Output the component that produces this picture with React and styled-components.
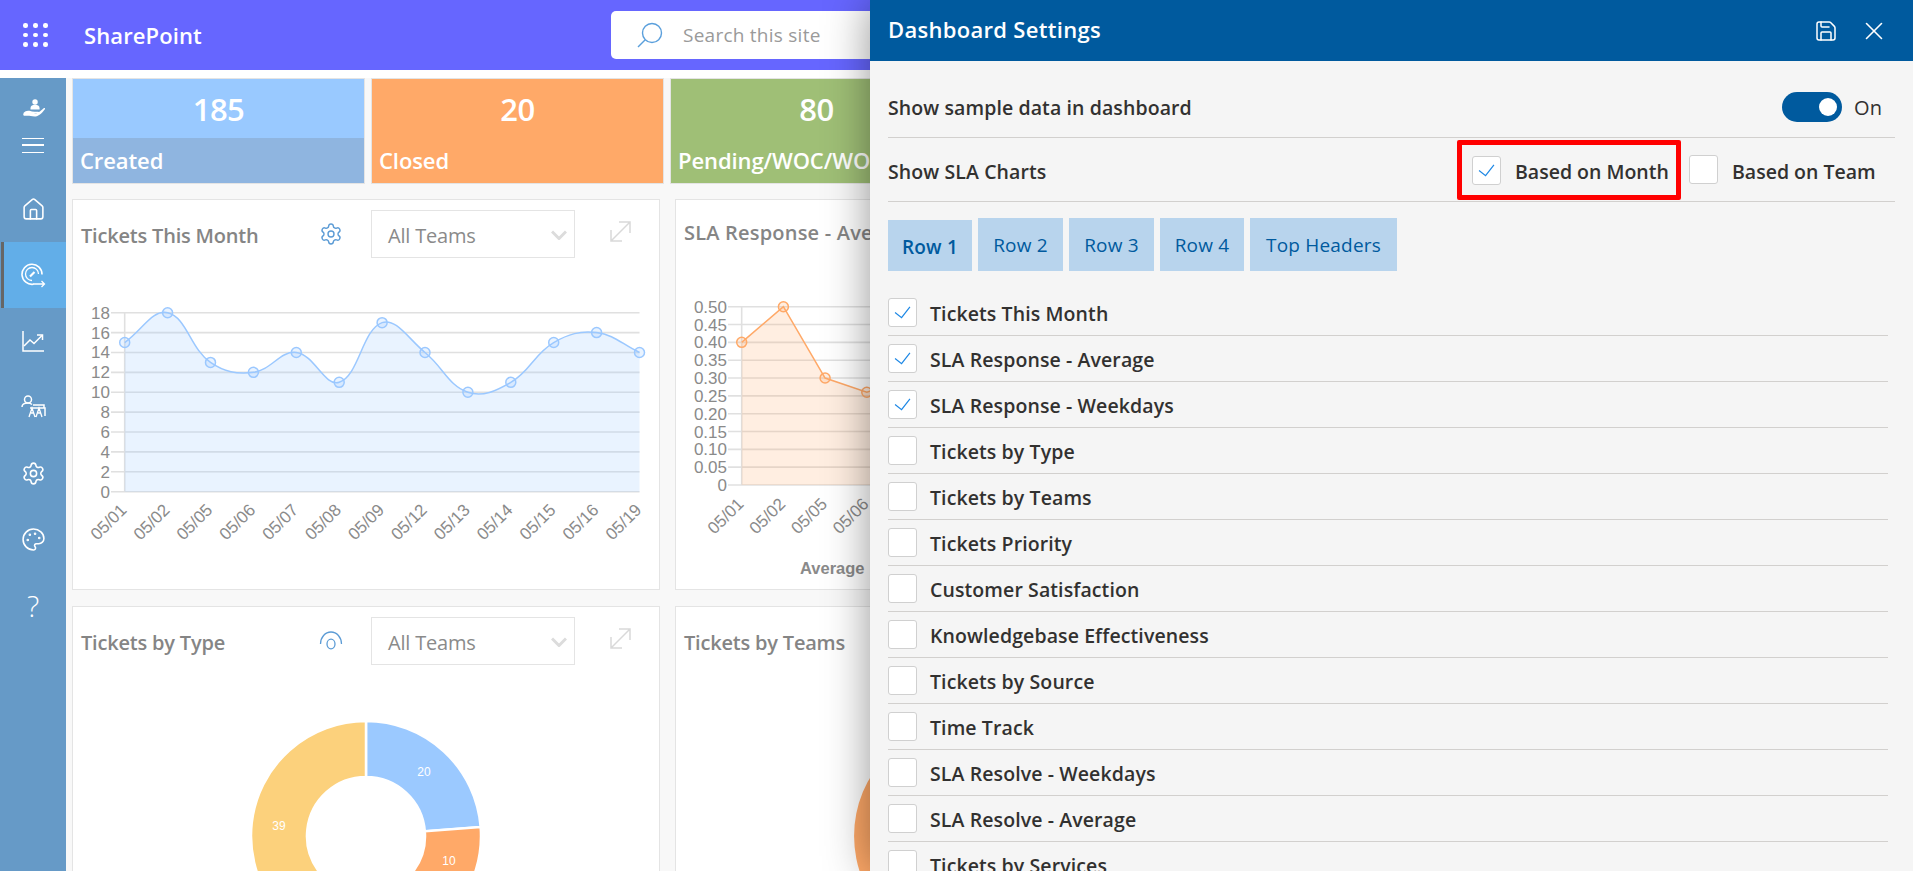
import React from 'react'
import styled, { createGlobalStyle } from 'styled-components'
import { House, Settings, Palette, Save, X } from 'lucide-react'

const UI_FONT = '"Open Sans", "Noto Sans", sans-serif'

const GlobalStyle = createGlobalStyle`
    html, body { margin:0; padding:0; height:100%; overflow:hidden; background:#fff; }
    body { font-family:${UI_FONT}; }
    * { box-sizing:border-box; }
`

const Page = styled.div`
    position:relative;
    width:1913px;
    height:871px;
    overflow:hidden;
    display:flex;
    flex-direction:column;
    background:#fff;
`

const TopBar = styled.header`
    flex:none;
    height:70px;
    background:#6666ff;
    display:flex;
    align-items:center;
    color:#fff;
`
const Waffle = styled.div`
    width:24px;
    margin-left:23px;
    display:grid;
    grid-template-columns:repeat(3,4px);
    gap:5px;
    justify-content:space-between;
    span { width:4.5px; height:4.5px; border-radius:50%; background:#fff; }
`
const Brand = styled.div`
    margin-left:37px;
    width:117px;
    font-size:22px;
    font-weight:600;
    letter-spacing:.1px;
    white-space:nowrap;
`
const SearchBox = styled.div`
    width:400px;
    height:48px;
    margin:0 0 0 410px;
    background:#fff;
    border-radius:5px;
    display:flex;
    align-items:center;
    padding-left:26px;
    color:#9a9a9a;
    font-size:19px;
    letter-spacing:.25px;
    gap:20px;
`

const Body = styled.div`
    flex:1;
    min-height:0;
    margin-top:8px;
    display:flex;
    background:#f8f8f8;
`
const Sidebar = styled.nav`
    flex:none;
    width:66px;
    background:#669ac7;
    color:#fff;
    display:flex;
    flex-direction:column;
`
const SideTop = styled.div`
    height:98px;
    padding-top:21px;
    display:flex;
    flex-direction:column;
    align-items:center;
    svg { margin-left:4px; }
`
const Burger = styled.div`
    width:22px;
    height:15px;
    margin-top:19px;
    border-top:1.5px solid #fff;
    border-bottom:1.5px solid #fff;
    position:relative;
    &::after {
        content:'';
        position:absolute;
        left:0;
        right:0;
        top:5.2px;
        height:1.5px;
        background:#fff;
    }
`
const SideItem = styled.div`
    height:66px;
    display:flex;
    align-items:center;
    justify-content:center;
    background:${p => p.$active ? '#62aee8' : 'transparent'};
    border-left:${p => p.$active ? '3px solid #666' : '0'};
    margin-left:${p => p.$active ? '1px' : '0'};
    padding-right:${p => p.$active ? '3px' : '0'};
    font-size:29px;
    font-weight:300;
`

const Main = styled.main`
    flex:1;
    min-width:0;
    padding-left:6px;
    overflow:hidden;
`
const Cards = styled.div`
    display:grid;
    grid-template-columns:repeat(6,293px);
    gap:6px;
`
const Card = styled.div`
    height:106px;
    border:1px solid #e4e4e4;
    background:${p => p.$color};
    color:#fff;
    display:flex;
    flex-direction:column;
    white-space:nowrap;
`
const CardNumber = styled.div`
    height:59px;
    display:flex;
    align-items:center;
    justify-content:center;
    font-size:31px;
    font-weight:600;
    letter-spacing:-.5px;
`
const CardLabel = styled.div`
    flex:1;
    background:${p => p.$band || 'transparent'};
    display:flex;
    align-items:center;
    padding:0 0 2px 7px;
    font-size:22px;
    font-weight:600;
    letter-spacing:-.1px;
`
const Panels = styled.div`
    margin-top:15px;
    display:grid;
    grid-template-columns:repeat(2,588px);
    grid-auto-rows:391px;
    gap:16px 15px;
`
const Panel = styled.section`
    background:#fff;
    border:1px solid #e4e4e4;
    overflow:hidden;
`
const PanelHead = styled.div`
    height:60px;
    padding:10px 0 0 8px;
    display:flex;
    align-items:flex-start;
`
const PanelTitle = styled.div`
    width:234px;
    height:48px;
    padding-top:${p => p.$raised ? '9px' : '12px'};
    font-size:20px;
    font-weight:600;
    color:#858585;
    letter-spacing:${p => p.$raised ? '.2px' : '-.2px'};
    white-space:nowrap;
`
const HeadIcon = styled.div`
    width:52px;
    height:48px;
    padding-top:12px;
    margin-left:4px;
    color:#5b9bd5;
`
const TeamSelect = styled.div`
    width:204px;
    height:48px;
    border:1.5px solid #e4e4e4;
    display:flex;
    align-items:center;
    justify-content:space-between;
    padding:2px 7px 0 16px;
    font-size:20px;
    color:#8a8a8a;
    letter-spacing:-.2px;
`
const ExpandBox = styled.div`
    margin:11px 0 0 35px;
    width:21px;
    height:21px;
`
const ChartSvg = styled.svg`
    display:block;
    width:586px;
    height:330px;
`

const Drawer = styled.aside`
    position:absolute;
    top:0;
    right:0;
    bottom:0;
    width:1043px;
    background:#f5f5f5;
    box-shadow:0 0 42px rgba(0,0,0,.42);
    color:#323130;
`
const DrawerHead = styled.div`
    height:61px;
    background:#005a9e;
    color:#fff;
    display:flex;
    align-items:center;
    padding:0 24px 0 18px;
`
const DrawerTitle = styled.h1`
    flex:1;
    margin:0 0 3px;
    font-size:22px;
    font-weight:600;
    letter-spacing:.3px;
`
const HeadActions = styled.div`
    display:flex;
    align-items:center;
    gap:21px;
`
const DrawerBody = styled.div`
    padding:0 18px;
`
const SettingRow = styled.div`
    display:flex;
    align-items:center;
    justify-content:space-between;
    height:${p => p.$h}px;
    padding-top:${p => p.$pad || 0}px;
    border-bottom:1px solid #d2d0ce;
    font-size:19.5px;
    font-weight:600;
    letter-spacing:.1px;
`
const ToggleWrap = styled.div`
    display:flex;
    align-items:center;
    gap:12px;
    margin-right:13px;
    font-size:20px;
    font-weight:400;
`
const Toggle = styled.div`
    width:60px;
    height:30px;
    border-radius:15px;
    background:#005a9e;
    display:flex;
    align-items:center;
    justify-content:flex-end;
    padding-right:5px;
    &::after {
        content:'';
        width:18px;
        height:18px;
        border-radius:50%;
        background:#fff;
    }
`
const SlaChoices = styled.div`
    display:flex;
    align-items:center;
    margin-right:22px;
`
const Highlight = styled.div`
    height:60px;
    width:224px;
    border:5px solid #f00;
    border-radius:2px;
    display:flex;
    align-items:center;
    padding-left:10px;
    margin:1px 8px 0 0;
`
const Choice = styled.label`
    display:flex;
    align-items:center;
    gap:14px;
    white-space:nowrap;
    letter-spacing:0;
    width:${p => p.$w ? `${p.$w}px` : 'auto'};
`
const LabelText = styled.span`
    padding-top:${p => p.$drop}px;
    white-space:nowrap;
`
const Box = styled.span`
    flex:none;
    width:29px;
    height:29px;
    background:#fff;
    border:1px solid #d0d0d0;
    border-radius:3px;
    display:flex;
    align-items:center;
    justify-content:center;
`
const Tabs = styled.div`
    display:flex;
    align-items:flex-end;
    gap:6px;
    margin-top:16px;
`
const Tab = styled.div`
    height:${p => p.$active ? 51 : 53}px;
    width:${p => p.$w}px;
    padding-top:${p => p.$active ? 3 : 1}px;
    background:#b8d4ed;
    color:#005a9e;
    font-size:19px;
    font-weight:${p => p.$active ? 600 : 400};
    letter-spacing:.2px;
    display:flex;
    align-items:center;
    justify-content:center;
`
const ChartList = styled.div`
    margin:19px 7px 0 0;
`
const ChartRow = styled.label`
    height:46px;
    display:flex;
    align-items:center;
    gap:13px;
    border-bottom:1px solid #d2d0ce;
    font-size:19.5px;
    font-weight:600;
    letter-spacing:.1px;
`

const CheckMark = () => (
    <svg width="29" height="29" viewBox="0 0 29 29" fill="none" stroke="#1e88e5" strokeWidth="1.3">
        <path d="M6.5 14.5 L13.5 20 L22.5 8.5" />
    </svg>
)
const Check = ({ on }) => <Box>{on && <CheckMark />}</Box>

const HandIcon = () => (
    <svg width="27" height="20" viewBox="0 0 27 22" fill="#fff">
        <circle cx="13" cy="3.2" r="3" />
        <path d="M8 10c0-2.600 2.400-3.600 5-3.600s5 1 5 3.600v1.600H8z" />
        <path d="M0.500 15c1.600-1.800 4-2.600 6.400-2 2 .5 3.600 1 5.600 1h4c1 0 1 1.400 0 1.400h-4.500c3 .8 5-.2 10.500-5.200.8-.6 2 .2 1.300 1-3.500 4.600-7 8-11.300 8-3.500 0-5-.8-8-.8H1.500c-.8 0-1.500-.7-1.500-1.400z" />
    </svg>
)
const GaugeIcon = () => (
    <svg width="25" height="25" viewBox="0 0 25 25" fill="none" stroke="#fff" strokeWidth="1.6">
        <path d="M12.500 21.200A10 10 0 1 1 21 11.500" />
        <path d="M11 17.500A6.500 6.500 0 1 1 17.500 11" strokeWidth="1.3" />
        <path d="M9 13.500l4.500-4.500" strokeWidth="2.200" />
        <path d="M12 21h11.500M20.500 18l3 3-3 3" strokeWidth="1.3" />
    </svg>
)
const TrendIcon = () => (
    <svg width="22" height="22" viewBox="0 0 22 22" fill="none" stroke="#fff" strokeWidth="1.5">
        <path d="M1 1v20h21" />
        <path d="M2 16l6-6 4 3.500 8-8" />
        <path d="M15 5h5.500v5" />
    </svg>
)
const TeamIcon = () => (
    <svg width="25" height="24" viewBox="0 0 25 24" fill="none" stroke="#fff" strokeWidth="1.5">
        <circle cx="7" cy="4.500" r="3.500" />
        <path d="M1 12c0-2.500 2.500-4 6-4 1.500 0 3 .6 4 1.500" />
        <path d="M9 13h15v8M12 10h11v3" />
        <path d="M8 22l3-9 3 9M10 18h3M15 22l3-9 3 9M17 18h3" strokeWidth="1.3" />
    </svg>
)
const SearchIcon = () => (
    <svg width="26" height="26" viewBox="0 0 26 26" fill="none" stroke="#5a9fdc" strokeWidth="1.4">
        <circle cx="15" cy="11" r="9.500" />
        <path d="M8 18l-7 7" />
    </svg>
)
const EyeIcon = () => (
    <svg width="24" height="24" viewBox="0 0 24 24" fill="none" stroke="#5b9bd5" strokeWidth="1.3">
        <path d="M1.500 15a10.500 12 0 0 1 21 0" />
        <ellipse cx="12" cy="15" rx="4" ry="4.800" />
    </svg>
)
const Chevron = () => (
    <svg width="16" height="10" viewBox="0 0 16 10" fill="none" stroke="#dcdcdc" strokeWidth="3">
        <path d="M1 1.500l7 7 7-7" />
    </svg>
)
const ExpandIcon = () => (
    <svg width="21" height="21" viewBox="0 0 21 21" fill="none" stroke="#d9d9d9" strokeWidth="1.5">
        <path d="M1 20L20 1M9 1h11v11M1 9v11h11" />
    </svg>
)

// chart.js style bezier through the points
const splinePath = (pts, tension = 0.4) => {
    let d = `M${pts[0][0]} ${pts[0][1]}`
    const ctrl = pts.map((p, i) => {
        const prev = pts[i - 1] || p
        const next = pts[i + 1] || p
        const d01 = Math.hypot(p[0] - prev[0], p[1] - prev[1])
        const d12 = Math.hypot(next[0] - p[0], next[1] - p[1])
        const sum = d01 + d12 || 1
        const fa = tension * d01 / sum
        const fb = tension * d12 / sum
        return {
            before: [p[0] - fa * (next[0] - prev[0]), p[1] - fa * (next[1] - prev[1])],
            after: [p[0] + fb * (next[0] - prev[0]), p[1] + fb * (next[1] - prev[1])]
        }
    })
    for (let i = 1; i < pts.length; i++) {
        const a = ctrl[i - 1].after
        const b = ctrl[i].before
        d += ` C${a[0]} ${a[1]} ${b[0]} ${b[1]} ${pts[i][0]} ${pts[i][1]}`
    }
    return d
}
const straightPath = pts => pts.map((p, i) => `${i ? 'L' : 'M'}${p[0]} ${p[1]}`).join(' ')

const DATES = ['05/01', '05/02', '05/05', '05/06', '05/07', '05/08', '05/09', '05/12', '05/13', '05/14', '05/15', '05/16', '05/19']

const LineChart = ({ originX, axisX, stepX, tickStart, topY, bottomY, max, ticks, values, color, fill, smooth, labelY, children }) => {
    const yOf = v => bottomY - (v / max) * (bottomY - topY)
    const pts = values.map((v, i) => [axisX + stepX * i, yOf(v)])
    const lastX = axisX + stepX * (DATES.length - 1)
    const line = smooth ? splinePath(pts) : straightPath(pts)
    const area = `${line} L${pts[pts.length - 1][0]} ${bottomY} L${axisX} ${bottomY} Z`
    return (
        <ChartSvg viewBox={`${originX} 260 586 330`} fontFamily='"Liberation Sans", Arial, sans-serif' fontSize="17" fill="#8a8a8a">
            {ticks.map(t => (
                <line key={t.v} x1={tickStart} x2={lastX} y1={yOf(t.v)} y2={yOf(t.v)} stroke="#e0e0e0" strokeWidth="1.6" />
            ))}
            <line x1={axisX} x2={axisX} y1={topY} y2={bottomY} stroke="#e0e0e0" strokeWidth="1.6" />
            <path d={area} fill={fill} />
            <path d={line} fill="none" stroke={color} strokeWidth="1.5" />
            {pts.map((p, i) => (
                <circle key={i} cx={p[0]} cy={p[1]} r="5" fill={fill} stroke={color} strokeWidth="1.5" />
            ))}
            {ticks.map(t => (
                <text key={t.v} x={tickStart - 1} y={yOf(t.v) + 6} textAnchor="end">{t.label}</text>
            ))}
            {DATES.map((d, i) => {
                const x = axisX + stepX * i + 3
                return <text key={d} x={x} y={labelY} textAnchor="end" transform={`rotate(-45 ${x} ${labelY})`}>{d}</text>
            })}
            {children}
        </ChartSvg>
    )
}

const ringSlice = (cx, cy, r, r0, from, to) => {
    const pt = (rad, a) => {
        const t = (a - 90) * Math.PI / 180
        return `${cx + rad * Math.cos(t)} ${cy + rad * Math.sin(t)}`
    }
    const large = to - from > 180 ? 1 : 0
    return `M${pt(r, from)} A${r} ${r} 0 ${large} 1 ${pt(r, to)} L${pt(r0, to)} A${r0} ${r0} 0 ${large} 0 ${pt(r0, from)} Z`
}

const TypeDonut = () => (
    <ChartSvg viewBox="73 667 586 330" fontFamily='"Liberation Sans", Arial, sans-serif' fontSize="12" fill="#fff" textAnchor="middle">
        <g stroke="#fff" strokeWidth="2.500">
            <path d={ringSlice(366, 836, 115, 59, 0, 85.500)} fill="#9bc9ff" />
            <path d={ringSlice(366, 836, 115, 59, 85.500, 128)} fill="#ffa968" />
            <path d={ringSlice(366, 836, 115, 59, 128, 193)} fill="#9fbf76" />
            <path d={ringSlice(366, 836, 115, 59, 193, 360)} fill="#fcd17c" />
        </g>
        <text x="424" y="776">20</text>
        <text x="279" y="830">39</text>
        <text x="449" y="865">10</text>
    </ChartSvg>
)
const TeamsDonut = () => (
    <ChartSvg viewBox="676 667 586 330">
        <path d={ringSlice(969, 836, 115, 59, 180, 360)} fill="#ffa968" />
    </ChartSvg>
)

const monthTicks = [0, 2, 4, 6, 8, 10, 12, 14, 16, 18].map(v => ({ v, label: String(v) }))
const avgTicks = [0, 0.05, 0.1, 0.15, 0.2, 0.25, 0.3, 0.35, 0.4, 0.45, 0.5].map(v => ({ v, label: v === 0 ? '0' : v.toFixed(2) }))

const CHART_ROWS = [
    ['Tickets This Month', true],
    ['SLA Response - Average', true],
    ['SLA Response - Weekdays', true],
    ['Tickets by Type'],
    ['Tickets by Teams'],
    ['Tickets Priority'],
    ['Customer Satisfaction'],
    ['Knowledgebase Effectiveness'],
    ['Tickets by Source'],
    ['Time Track'],
    ['SLA Resolve - Weekdays'],
    ['SLA Resolve - Average'],
    ['Tickets by Services']
]

const App = () => (
    <Page>
        <GlobalStyle />
        <TopBar>
            <Waffle>{Array.from({ length: 9 }, (_, i) => <span key={i} />)}</Waffle>
            <Brand>SharePoint</Brand>
            <SearchBox><SearchIcon />Search this site</SearchBox>
        </TopBar>
        <Body>
            <Sidebar>
                <SideTop><HandIcon /><Burger /></SideTop>
                <SideItem><House size={25} strokeWidth={1.5} /></SideItem>
                <SideItem $active><GaugeIcon /></SideItem>
                <SideItem><TrendIcon /></SideItem>
                <SideItem><TeamIcon /></SideItem>
                <SideItem><Settings size={25} strokeWidth={1.5} /></SideItem>
                <SideItem><Palette size={25} strokeWidth={1.5} /></SideItem>
                <SideItem>?</SideItem>
            </Sidebar>
            <Main>
                <Cards>
                    <Card $color="#99c9ff"><CardNumber>185</CardNumber><CardLabel $band="#8fb5e0">Created</CardLabel></Card>
                    <Card $color="#ffa968"><CardNumber>20</CardNumber><CardLabel>Closed</CardLabel></Card>
                    <Card $color="#9fbf76"><CardNumber>80</CardNumber><CardLabel>Pending/WOC/WOH</CardLabel></Card>
                </Cards>
                <Panels>
                    <Panel>
                        <PanelHead>
                            <PanelTitle>Tickets This Month</PanelTitle>
                            <HeadIcon><Settings size={24} strokeWidth={1.4} /></HeadIcon>
                            <TeamSelect>All Teams<Chevron /></TeamSelect>
                            <ExpandBox><ExpandIcon /></ExpandBox>
                        </PanelHead>
                        <LineChart originX={73} axisX={124.7} stepX={42.9} tickStart={111} topY={312.7} bottomY={491.7} max={18}
                            ticks={monthTicks} values={[15, 18, 13, 12, 14, 11, 17, 14, 10, 11, 15, 16, 14]}
                            color="#9bc8ff" fill="rgba(155,200,255,.22)" smooth labelY={511} />
                    </Panel>
                    <Panel>
                        <PanelHead>
                            <PanelTitle $raised>SLA Response - Average</PanelTitle>
                        </PanelHead>
                        <LineChart originX={676} axisX={741.7} stepX={41.7} tickStart={728} topY={306.7} bottomY={485} max={0.5}
                            ticks={avgTicks} values={[0.4, 0.5, 0.3, 0.26, 0.3, 0.35, 0.25, 0.3, 0.4, 0.3, 0.2, 0.3, 0.25]}
                            color="#ffa968" fill="rgba(255,169,104,.2)" labelY={505}>
                            <text x="800" y="574" fontWeight="700" fontSize="16.500">Average</text>
                        </LineChart>
                    </Panel>
                    <Panel>
                        <PanelHead>
                            <PanelTitle>Tickets by Type</PanelTitle>
                            <HeadIcon><EyeIcon /></HeadIcon>
                            <TeamSelect>All Teams<Chevron /></TeamSelect>
                            <ExpandBox><ExpandIcon /></ExpandBox>
                        </PanelHead>
                        <TypeDonut />
                    </Panel>
                    <Panel>
                        <PanelHead>
                            <PanelTitle>Tickets by Teams</PanelTitle>
                        </PanelHead>
                        <TeamsDonut />
                    </Panel>
                </Panels>
            </Main>
        </Body>
        <Drawer>
            <DrawerHead>
                <DrawerTitle>Dashboard Settings</DrawerTitle>
                <HeadActions>
                    <Save size={24} strokeWidth={1.5} />
                    <X size={30} strokeWidth={1.3} />
                </HeadActions>
            </DrawerHead>
            <DrawerBody>
                <SettingRow $h={77} $pad={16}>
                    Show sample data in dashboard
                    <ToggleWrap><Toggle />On</ToggleWrap>
                </SettingRow>
                <SettingRow $h={64}>
                    <LabelText $drop={3}>Show SLA Charts</LabelText>
                    <SlaChoices>
                        <Highlight>
                            <Choice><Check on /><LabelText $drop={3}>Based on Month</LabelText></Choice>
                        </Highlight>
                        <Choice $w={184}><Check /><LabelText $drop={3}>Based on Team</LabelText></Choice>
                    </SlaChoices>
                </SettingRow>
                <Tabs>
                    <Tab $active $w={84}>Row 1</Tab>
                    <Tab $w={85}>Row 2</Tab>
                    <Tab $w={85}>Row 3</Tab>
                    <Tab $w={84}>Row 4</Tab>
                    <Tab $w={147}>Top Headers</Tab>
                </Tabs>
                <ChartList>
                    {CHART_ROWS.map(([name, on]) => (
                        <ChartRow key={name}><Check on={on} /><LabelText $drop={2}>{name}</LabelText></ChartRow>
                    ))}
                </ChartList>
            </DrawerBody>
        </Drawer>
    </Page>
)

export default App
